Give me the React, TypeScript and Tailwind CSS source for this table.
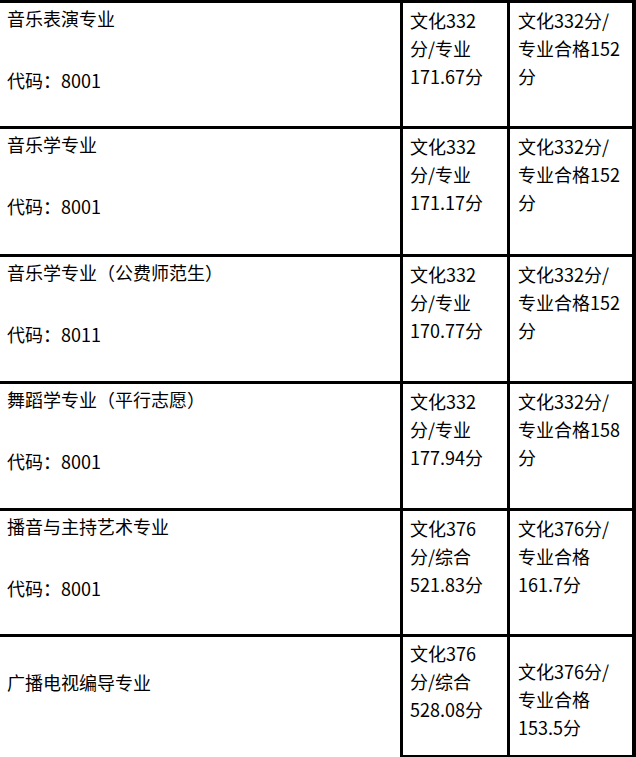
const rows = [
  {
    name: "音乐表演专业",
    code: "代码：8001",
    a: ["文化332", "分/专业", "171.67分"],
    b: ["文化332分/", "专业合格152", "分"],
    h: "h-[126px]",
  },
  {
    name: "音乐学专业",
    code: "代码：8001",
    a: ["文化332", "分/专业", "171.17分"],
    b: ["文化332分/", "专业合格152", "分"],
    h: "h-[128px]",
  },
  {
    name: "音乐学专业（公费师范生）",
    code: "代码：8011",
    a: ["文化332", "分/专业", "170.77分"],
    b: ["文化332分/", "专业合格152", "分"],
    h: "h-[127px]",
  },
  {
    name: "舞蹈学专业（平行志愿）",
    code: "代码：8001",
    a: ["文化332", "分/专业", "177.94分"],
    b: ["文化332分/", "专业合格158", "分"],
    h: "h-[127px]",
  },
  {
    name: "播音与主持艺术专业",
    code: "代码：8001",
    a: ["文化376", "分/综合", "521.83分"],
    b: ["文化376分/", "专业合格", "161.7分"],
    h: "h-[126px]",
  },
];

function Lines({ items }: { items: string[] }) {
  return (
    <div className="flex flex-col leading-[28px] whitespace-nowrap">
      {items.map((t) => (
        <span key={t}>{t}</span>
      ))}
    </div>
  );
}

export default function App() {
  return (
    <div
      className="w-[636px] h-[757px] overflow-hidden bg-white text-black text-[18px]"
      style={{ fontFamily: '"Noto Sans CJK SC", "Noto Sans", sans-serif' }}
    >
      <div className="grid grid-cols-[400px_107px_129px]">
        {rows.map((r) => (
          <div key={r.name + r.a[2]} className="contents">
            <div className={`${r.h} border-t-[3px] border-black pl-[7px] pt-px flex flex-col gap-[34px] leading-[28px]`}>
              <span>{r.name}</span>
              <span>{r.code}</span>
            </div>
            <div className={`${r.h} border-t-[3px] border-l-[3px] border-black pl-[7px] pt-[3px]`}>
              <Lines items={r.a} />
            </div>
            <div className={`${r.h} border-t-[3px] border-l-[3px] border-r-[4px] border-black pl-2 pt-[3px]`}>
              <Lines items={r.b} />
            </div>
          </div>
        ))}
        <div className="h-[124px] border-t-[3px] border-black pl-[7px] pt-[31px] leading-[28px]">
          广播电视编导专业
        </div>
        <div className="h-[124px] border-t-[3px] border-l-[3px] border-b-[3px] border-black pl-[7px] pt-[2px]">
          <Lines items={["文化376", "分/综合", "528.08分"]} />
        </div>
        <div className="h-[124px] border-t-[3px] border-l-[3px] border-r-[4px] border-b-[3px] border-black pl-2 pt-[20px]">
          <Lines items={["文化376分/", "专业合格", "153.5分"]} />
        </div>
      </div>
    </div>
  );
}
